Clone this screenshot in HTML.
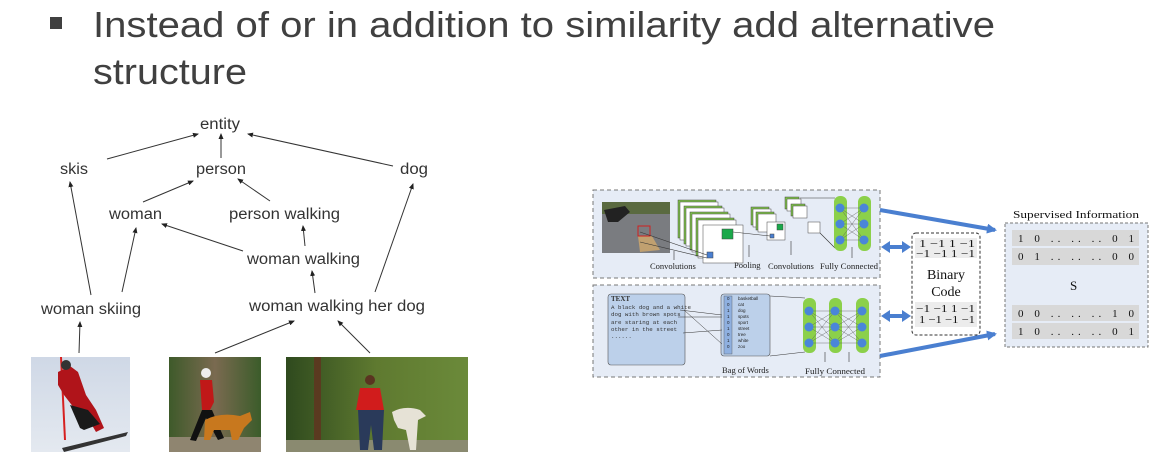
<!DOCTYPE html>
<html><head><meta charset="utf-8"><style>
html,body{margin:0;padding:0;background:#fff;}
svg{display:block;}
</style></head><body>
<svg width="1157" height="474" viewBox="0 0 1157 474" xmlns="http://www.w3.org/2000/svg">
<defs>
<marker id="ah" markerWidth="6" markerHeight="6" refX="5" refY="3" orient="auto" markerUnits="userSpaceOnUse"><path d="M0,0.5 L6,3 L0,5.5z" fill="#222"/></marker>
<marker id="bh" markerWidth="10" markerHeight="10" refX="8" refY="5" orient="auto" markerUnits="userSpaceOnUse"><path d="M0,0 L10,5 L0,10z" fill="#4a7fd0"/></marker>
<linearGradient id="sky" x1="0" y1="0" x2="0" y2="1"><stop offset="0" stop-color="#cfd8e6"/><stop offset="1" stop-color="#e4e9f0"/></linearGradient>
<linearGradient id="forest" x1="0" y1="0" x2="1" y2="0"><stop offset="0" stop-color="#3e5a2a"/><stop offset="0.5" stop-color="#7a6a50"/><stop offset="1" stop-color="#3b5c2a"/></linearGradient>
<linearGradient id="forest2" x1="0" y1="0" x2="1" y2="0"><stop offset="0" stop-color="#2f4a1e"/><stop offset="0.5" stop-color="#5f7a30"/><stop offset="1" stop-color="#6b8a3a"/></linearGradient>
</defs>

<rect x="50" y="17" width="12" height="12" fill="#404040"/>
<g font-family="Liberation Sans, Arial, sans-serif" font-size="36" fill="#404040">
<text x="93" y="37" textLength="902" lengthAdjust="spacingAndGlyphs">Instead of or in addition to similarity add alternative</text>
<text x="93" y="84" textLength="154" lengthAdjust="spacingAndGlyphs">structure</text>
</g>

<g font-family="Liberation Sans, Arial, sans-serif" font-size="15.5" fill="#333">
<text x="200" y="129" textLength="40" lengthAdjust="spacingAndGlyphs">entity</text>
<text x="60" y="174" textLength="28" lengthAdjust="spacingAndGlyphs">skis</text>
<text x="196" y="174" textLength="50" lengthAdjust="spacingAndGlyphs">person</text>
<text x="400" y="174" textLength="28" lengthAdjust="spacingAndGlyphs">dog</text>
<text x="109" y="219" textLength="53" lengthAdjust="spacingAndGlyphs">woman</text>
<text x="229" y="219" textLength="111" lengthAdjust="spacingAndGlyphs">person walking</text>
<text x="247" y="264" textLength="113" lengthAdjust="spacingAndGlyphs">woman walking</text>
<text x="41" y="314" textLength="100" lengthAdjust="spacingAndGlyphs">woman skiing</text>
<text x="249" y="311" textLength="176" lengthAdjust="spacingAndGlyphs">woman walking her dog</text>
</g>
<g stroke="#333" stroke-width="1" marker-end="url(#ah)" fill="none">
<line x1="107" y1="159" x2="198" y2="134"/>
<line x1="221" y1="158" x2="221" y2="134"/>
<line x1="393" y1="166" x2="248" y2="134"/>
<line x1="143" y1="202" x2="193" y2="181"/>
<line x1="270" y1="201" x2="238" y2="179"/>
<line x1="91" y1="295" x2="70" y2="182"/>
<line x1="122" y1="292" x2="136" y2="228"/>
<line x1="243" y1="251" x2="162" y2="224"/>
<line x1="305" y1="246" x2="303" y2="226"/>
<line x1="315" y1="293" x2="312" y2="271"/>
<line x1="375" y1="292" x2="413" y2="184"/>
<line x1="79" y1="353" x2="80" y2="322"/>
<line x1="215" y1="353" x2="294" y2="321"/>
<line x1="370" y1="353" x2="338" y2="321"/>
</g>

<rect x="31" y="357" width="99" height="95" fill="url(#sky)"/>
<line x1="61" y1="357" x2="65" y2="440" stroke="#d62020" stroke-width="2"/>
<path d="M58,372 L70,366 L78,372 L86,395 L96,410 L104,428 L96,432 L86,415 L74,408 L64,395 L58,385z" fill="#b0141a"/>
<path d="M70,405 L80,428 L84,430 L100,424 L88,410z" fill="#1a1a1a"/>
<path d="M62,448 L128,432 L126,436 L64,452z" fill="#333"/>
<circle cx="66" cy="365" r="5" fill="#333"/>
<rect x="169" y="357" width="92" height="95" fill="url(#forest)"/>
<rect x="169" y="437" width="92" height="15" fill="#8f8570"/>
<path d="M200,380 L212,380 L214,402 L210,410 L202,410z" fill="#c01818"/>
<circle cx="206" cy="373" r="5" fill="#eee"/>
<path d="M202,410 L190,440 L196,441 L206,418 L218,440 L224,438 L212,410z" fill="#111"/>
<path d="M205,420 Q220,412 240,416 L250,412 L252,420 L244,428 L238,440 L232,440 L230,430 L214,430 L210,440 L204,440z" fill="#c8781e"/>
<rect x="286" y="357" width="182" height="95" fill="url(#forest2)"/>
<rect x="314" y="357" width="7" height="85" fill="#5a3a20"/>
<rect x="286" y="440" width="182" height="12" fill="#8a8a70"/>
<path d="M360,388 L380,388 L384,410 L356,410z" fill="#d11c1c"/>
<circle cx="370" cy="380" r="5" fill="#5a3420"/>
<path d="M358,410 L384,410 L382,450 L374,450 L371,425 L368,450 L360,450z" fill="#2a3a5a"/>
<path d="M392,412 Q405,405 420,410 L426,416 L418,420 L416,450 L410,450 L406,430 L398,428 L394,420z" fill="#e6e2d6"/>

<g font-family="Liberation Serif, DejaVu Serif, serif">
<rect x="593" y="190" width="287" height="88" fill="#e6ecf6" stroke="#777" stroke-dasharray="4,3"/>
<rect x="593" y="285" width="287" height="92" fill="#e6ecf6" stroke="#777" stroke-dasharray="4,3"/>
<rect x="602" y="202" width="68" height="51" fill="#7a7c80"/>
<rect x="602" y="202" width="68" height="12" fill="#5a6a40"/>
<path d="M604,210 L625,206 L630,212 L618,222 L608,222z" fill="#222"/>
<path d="M638,236 L652,236 L660,250 L640,252z" fill="#c0a070"/>
<rect x="638" y="226" width="12" height="10" fill="none" stroke="#d02020"/>
<g stroke="#444" stroke-width="0.5">
<rect x="678" y="200" width="38" height="38" fill="#7fc24a"/><rect x="680" y="202" width="38" height="38" fill="#fff"/>
<rect x="684" y="206" width="38" height="38" fill="#7fc24a"/><rect x="686" y="208" width="38" height="38" fill="#fff"/>
<rect x="690" y="212" width="38" height="38" fill="#7fc24a"/><rect x="692" y="214" width="38" height="38" fill="#fff"/>
<rect x="696" y="218" width="38" height="38" fill="#7fc24a"/><rect x="698" y="220" width="38" height="38" fill="#fff"/>
<rect x="703" y="225" width="40" height="38" fill="#fff"/>
<rect x="722" y="229" width="11" height="10" fill="#1aa84a"/>
<rect x="707" y="252" width="6" height="6" fill="#4a7fd0"/>
<rect x="751" y="207" width="18" height="18" fill="#7fc24a"/><rect x="753" y="209" width="18" height="18" fill="#fff"/>
<rect x="756" y="212" width="18" height="18" fill="#7fc24a"/><rect x="758" y="214" width="18" height="18" fill="#fff"/>
<rect x="767" y="222" width="18" height="18" fill="#fff"/>
<rect x="777" y="224" width="6" height="6" fill="#1aa84a"/>
<rect x="770" y="234" width="4" height="4" fill="#4a7fd0"/>
<rect x="785" y="197" width="14" height="12" fill="#7fc24a"/><rect x="787" y="199" width="14" height="12" fill="#fff"/>
<rect x="791" y="204" width="14" height="12" fill="#7fc24a"/><rect x="793" y="206" width="14" height="12" fill="#fff"/>
<rect x="808" y="222" width="12" height="11" fill="#fff"/>
</g>
<g stroke="#333" stroke-width="0.6">
<line x1="640" y1="232" x2="707" y2="255"/><line x1="640" y1="242" x2="707" y2="258"/>
<line x1="733" y1="232" x2="770" y2="236"/><line x1="800" y1="198" x2="835" y2="198"/><line x1="820" y1="233" x2="835" y2="248"/>
</g>
<rect x="834" y="196" width="13" height="55" rx="6" fill="#8bd04a"/>
<rect x="858" y="196" width="13" height="55" rx="6" fill="#8bd04a"/>
<g stroke="#555" stroke-width="0.4"><path d="M840,208 L864,208 M840,208 L864,224 M840,208 L864,240 M840,224 L864,208 M840,224 L864,224 M840,224 L864,240 M840,240 L864,208 M840,240 L864,224 M840,240 L864,240"/></g>
<g fill="#4a86d8"><circle cx="840" cy="208" r="4.5"/><circle cx="840" cy="224" r="4.5"/><circle cx="840" cy="240" r="4.5"/><circle cx="864" cy="208" r="4.5"/><circle cx="864" cy="224" r="4.5"/><circle cx="864" cy="240" r="4.5"/></g>
<g stroke="#333" stroke-width="0.6"><line x1="674" y1="260" x2="674" y2="251"/><line x1="749" y1="257" x2="749" y2="245"/><line x1="791" y1="255" x2="791" y2="241"/><line x1="852" y1="258" x2="852" y2="247"/></g>
<g font-size="8.5" fill="#222">
<text x="650" y="269">Convolutions</text><text x="734" y="268">Pooling</text><text x="768" y="269">Convolutions</text><text x="820" y="269" textLength="58" lengthAdjust="spacingAndGlyphs">Fully Connected</text>
</g>
<rect x="608" y="294" width="77" height="71" rx="3" fill="#bcd0ea" stroke="#555" stroke-width="0.6"/>
<g font-family="Liberation Mono, monospace" font-size="5.8" fill="#333">
<text x="611" y="301" font-weight="bold" font-family="Liberation Serif, serif" font-size="7">TEXT</text>
<text x="611" y="309">A black dog and a white</text>
<text x="611" y="316">dog with brown spots</text>
<text x="611" y="324">are staring at each</text>
<text x="611" y="331">other in the street</text>
<text x="611" y="338">......</text>
</g>
<rect x="721" y="294" width="49" height="62" rx="3" fill="#bcd0ea" stroke="#555" stroke-width="0.6"/>
<rect x="724" y="296" width="8" height="58" fill="#8fb0e0" stroke="#555" stroke-width="0.4"/>
<g font-size="4.5" fill="#222" font-family="Liberation Sans, sans-serif">
<text x="727" y="300">0</text><text x="727" y="306">0</text><text x="727" y="312">1</text><text x="727" y="318">1</text><text x="727" y="324">0</text><text x="727" y="330">1</text><text x="727" y="336">0</text><text x="727" y="342">1</text><text x="727" y="348">0</text>
<text x="738" y="300">basketball</text><text x="738" y="306">cat</text><text x="738" y="312">dog</text><text x="738" y="318">spots</text><text x="738" y="324">sport</text><text x="738" y="330">street</text><text x="738" y="336">tree</text><text x="738" y="342">white</text><text x="738" y="348">zoo</text>
</g>
<g stroke="#333" stroke-width="0.5" fill="none">
<path d="M680,310 L722,315 M678,317 L722,317 M683,333 L722,330 M684,310 L722,344 M770,296 L805,298 M770,356 L805,352"/>
</g>
<rect x="803" y="298" width="13" height="55" rx="6" fill="#8bd04a"/>
<rect x="829" y="298" width="13" height="55" rx="6" fill="#8bd04a"/>
<rect x="856" y="298" width="13" height="55" rx="6" fill="#8bd04a"/>
<g stroke="#555" stroke-width="0.4"><path d="M809,311 L835,311 M809,311 L835,327 M809,311 L835,343 M809,327 L835,311 M809,327 L835,343 M809,343 L835,311 M809,343 L835,327 M809,343 L835,343 M809,327 L835,327 M835,311 L862,311 M835,311 L862,327 M835,311 L862,343 M835,327 L862,311 M835,327 L862,343 M835,343 L862,311 M835,343 L862,327 M835,343 L862,343 M835,327 L862,327"/></g>
<g fill="#4a86d8"><circle cx="809" cy="311" r="4.5"/><circle cx="809" cy="327" r="4.5"/><circle cx="809" cy="343" r="4.5"/><circle cx="835" cy="311" r="4.5"/><circle cx="835" cy="327" r="4.5"/><circle cx="835" cy="343" r="4.5"/><circle cx="862" cy="311" r="4.5"/><circle cx="862" cy="327" r="4.5"/><circle cx="862" cy="343" r="4.5"/></g>
<g stroke="#333" stroke-width="0.6"><line x1="825" y1="362" x2="825" y2="352"/><line x1="849" y1="362" x2="849" y2="352"/></g>
<g font-size="8.5" fill="#222"><text x="722" y="373">Bag of Words</text><text x="805" y="374" textLength="60" lengthAdjust="spacingAndGlyphs">Fully Connected</text></g>

<rect x="912" y="233" width="68" height="102" rx="4" fill="#fff" stroke="#333" stroke-dasharray="3,2"/>
<rect x="915" y="238" width="62" height="20" fill="#ececec"/>
<rect x="915" y="302" width="62" height="25" fill="#ececec"/>
<g font-size="11" fill="#111">
<text x="919" y="247" textLength="56" lengthAdjust="spacingAndGlyphs">1 −1 1 −1</text><text x="916" y="257" textLength="59" lengthAdjust="spacingAndGlyphs">−1 −1 1 −1</text>
<text x="916" y="312" textLength="59" lengthAdjust="spacingAndGlyphs">−1 −1 1 −1</text><text x="919" y="323" textLength="56" lengthAdjust="spacingAndGlyphs">1 −1 −1 −1</text>
</g>
<g font-size="14" fill="#111" text-anchor="middle"><text x="946" y="279">Binary</text><text x="946" y="296">Code</text></g>

<text x="1013" y="218" font-size="11" fill="#111" textLength="126" lengthAdjust="spacingAndGlyphs">Supervised Information</text>
<rect x="1005" y="223" width="143" height="124" fill="#e6ecf6" stroke="#777" stroke-dasharray="3,2"/>
<rect x="1012" y="230" width="127" height="16" fill="#d8d8d8"/>
<rect x="1012" y="248" width="127" height="17" fill="#d8d8d8"/>
<rect x="1012" y="305" width="127" height="16" fill="#d8d8d8"/>
<rect x="1012" y="323" width="127" height="16" fill="#d8d8d8"/>
<g font-size="11" fill="#111">
<text x="1018" y="242" textLength="116" lengthAdjust="spacing">1 0 .. .. .. 0 1</text>
<text x="1018" y="260" textLength="116" lengthAdjust="spacing">0 1 .. .. .. 0 0</text>
<text x="1018" y="317" textLength="116" lengthAdjust="spacing">0 0 .. .. .. 1 0</text>
<text x="1018" y="335" textLength="116" lengthAdjust="spacing">1 0 .. .. .. 0 1</text>
<text x="1070" y="290" font-size="13">S</text>
</g>
</g>
<g stroke="#4a7fd0" stroke-width="4" fill="none">
<line x1="880" y1="210" x2="995" y2="230" marker-end="url(#bh)"/>
<line x1="880" y1="356" x2="995" y2="334" marker-end="url(#bh)"/>
<line x1="888" y1="247" x2="904" y2="247"/>
<line x1="888" y1="316" x2="904" y2="316"/>
</g>
<g fill="#4a7fd0">
<path d="M881,247 L890,241 L890,253z"/><path d="M911,247 L902,241 L902,253z"/>
<path d="M881,316 L890,310 L890,322z"/><path d="M911,316 L902,310 L902,322z"/>
</g>
</svg>
</body></html>
